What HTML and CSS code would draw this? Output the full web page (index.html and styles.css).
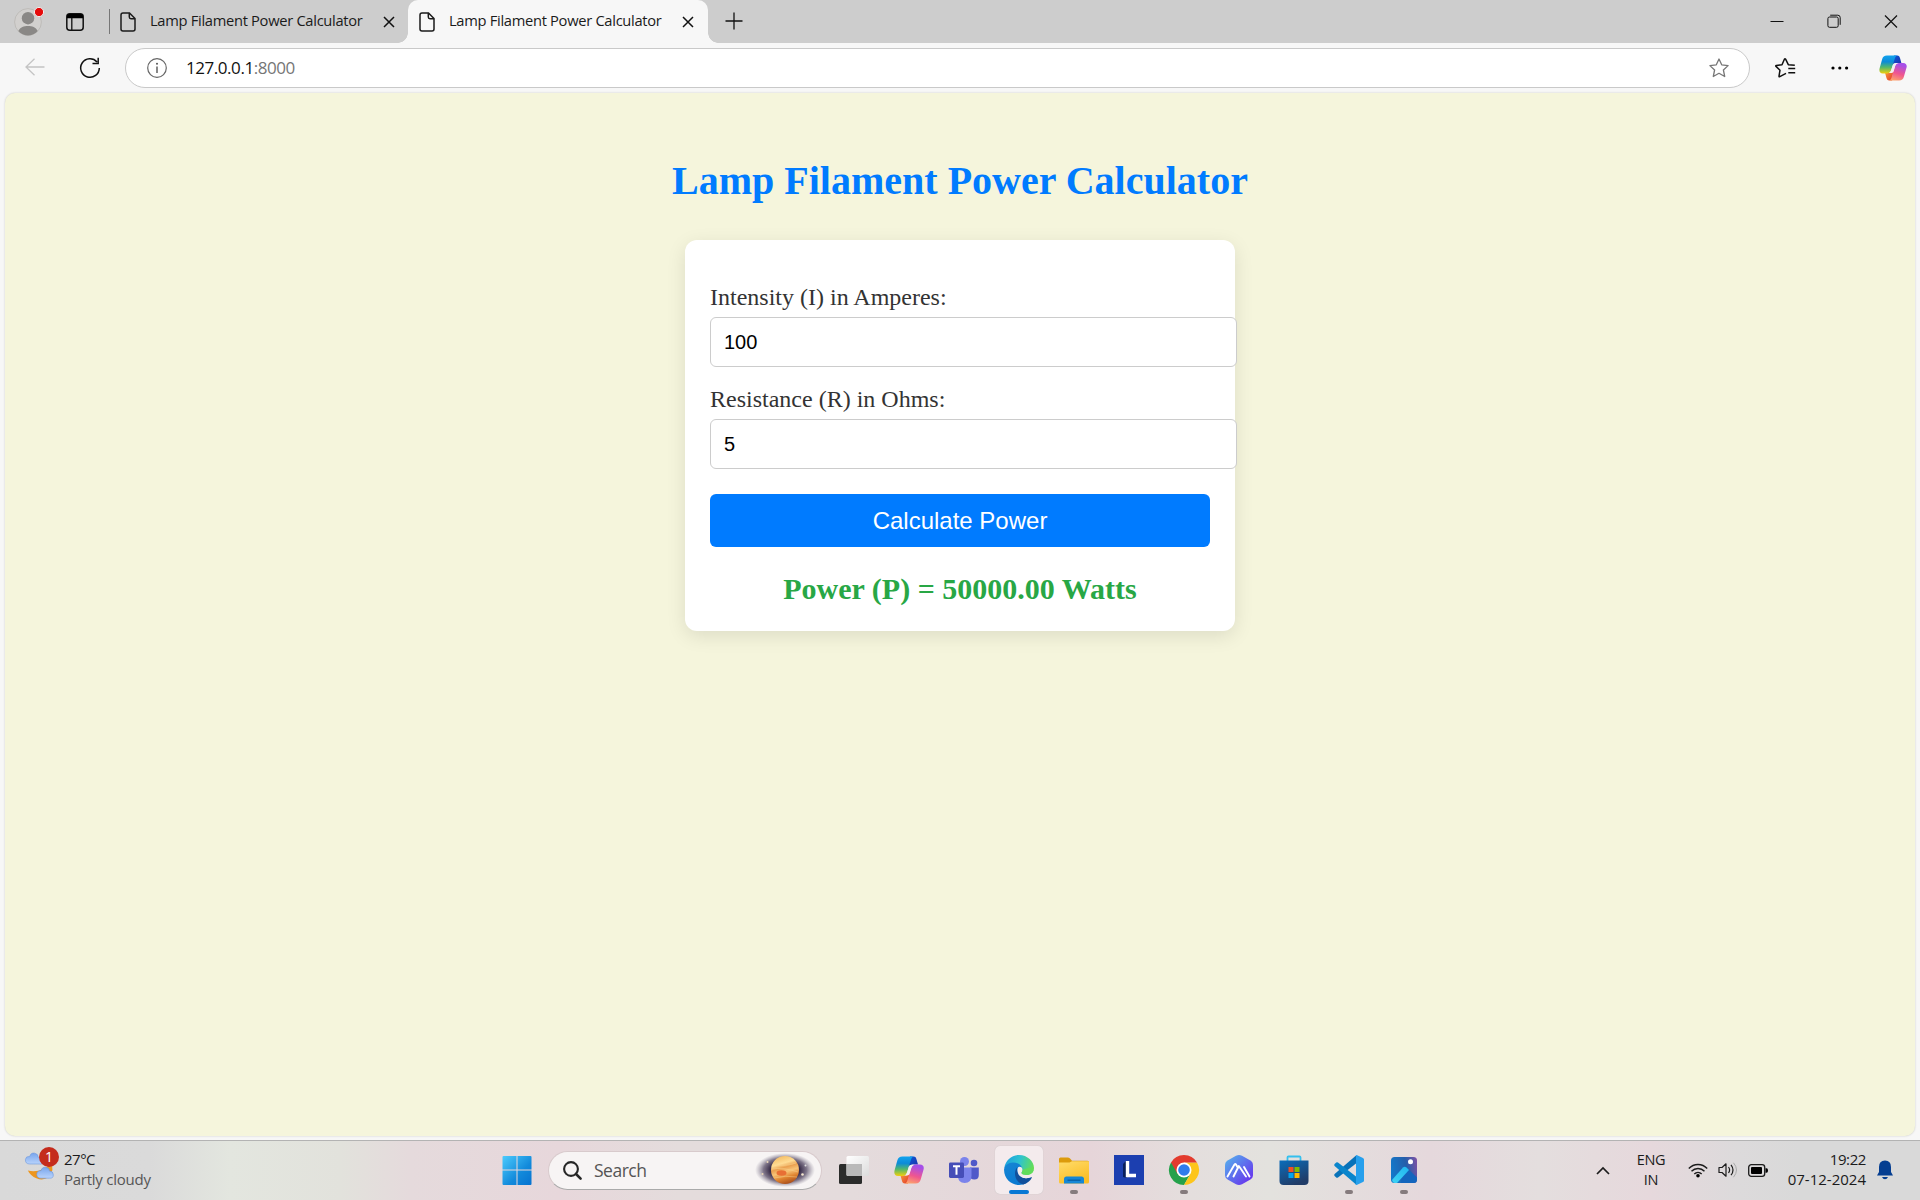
FILE: index.html
```html
<!DOCTYPE html>
<html lang="en">
<head>
<meta charset="utf-8">
<title>Lamp Filament Power Calculator</title>
<link rel="stylesheet" href="styles.css">
</head>
<body>
<svg class="defs" width="0" height="0" aria-hidden="true">
  <defs>
    <linearGradient id="cpBlue" x1="0" y1="0" x2="0" y2="1"><stop offset="0" stop-color="#11a3ee"/><stop offset=".35" stop-color="#0c8bd8"/><stop offset=".65" stop-color="#52b86c"/><stop offset="1" stop-color="#f3cf0b"/></linearGradient>
    <linearGradient id="cpNavy" x1="0" y1="0" x2="1" y2="1"><stop offset="0" stop-color="#0b5bd9"/><stop offset="1" stop-color="#1f2fa8"/></linearGradient>
    <linearGradient id="cpPink" x1=".3" y1="0" x2="0" y2="1"><stop offset="0" stop-color="#a64fe8"/><stop offset=".5" stop-color="#f0568f"/><stop offset="1" stop-color="#ffb265"/></linearGradient>
    <linearGradient id="cpRed" x1="0" y1="0" x2="1" y2="1"><stop offset="0" stop-color="#f9a13a"/><stop offset="1" stop-color="#e2352c"/></linearGradient>
    <symbol id="copilot" viewBox="0 0 30 28">
      <path d="M16 .5h3.500c2 0 2.600 1.200 3.200 3.400L24 8.500h-4c-2.500 0-3.500.3-5.500 2.500z" fill="url(#cpNavy)"/>
      <path d="M14 27.500h-3c-2 0-2.600-1.200-3.200-3.300L6.500 19.500h4c2.300 0 3.400-.5 5-2.500z" fill="url(#cpRed)"/>
      <path d="M8.500.5H20c-1.700 0-2.500 1.400-3.200 3.700l-3.600 11.500c-.9 2.800-2.200 4.300-5 4.300H4C1 20-.3 17.500.6 14.300L3.300 4.500C4.100 1.800 5.500.5 8.500.5z" fill="url(#cpBlue)"/>
      <path d="M21.500 27.500H10.500c1.700 0 2.400-1.400 3.100-3.700l3.400-11.300c.8-2.700 2-4 4.700-4H26c3 0 4.400 2.300 3.500 5.200l-2.800 9.800c-.8 2.700-2.200 4-5.200 4z" fill="url(#cpPink)"/>
      <path d="M17.600 8.700h3c-1.900.5-2.800 1.700-3.400 3.800l-1.500 5c-.4 1.200-1.300 1.900-2.600 1.900h-2.300c1.200-.5 1.900-1.700 2.400-3.200l1.600-5.200c.5-1.500 1.300-2.300 2.800-2.300z" fill="#f3eef2"/>
    </symbol>
    <symbol id="page" viewBox="0 0 16 20">
      <path d="M3 1h6.500L15 6.500V17q0 2-2 2H3q-2 0-2-2V3q0-2 2-2zM9.300 1v4q0 1.700 1.700 1.700h4" fill="none" stroke="#1b1b1b" stroke-width="1.500"/>
    </symbol>
    <symbol id="cross" viewBox="0 0 12 12"><path d="M1 1l10 10M11 1L1 11" stroke="#111" stroke-width="1.500"/></symbol>
  </defs>
</svg>

<div class="window">
  <header class="tabstrip">
    <svg class="avatar" viewBox="0 0 32 32"><circle cx="14" cy="17" r="13.400" fill="#d2d0ce" stroke="#bebcb9"/><circle cx="14" cy="13.200" r="6.200" fill="#8a8886"/><path d="M4.300 26c2-4 5.500-5 9.700-5s7.700 1 9.700 5c-2.500 3-6 4.400-9.700 4.400S6.800 29 4.300 26z" fill="#8a8886"/><circle cx="25" cy="7" r="4.600" fill="#e60b0b" stroke="#eee"/></svg>
    <svg class="workspaces" viewBox="0 0 18 18"><rect x=".8" y=".8" width="16.400" height="16.400" rx="3" fill="none" stroke="#111" stroke-width="1.500"/><path d="M1 5.200V3q0-2 2-2h12q2 0 2 2v2.200z" fill="#000"/><path d="M5.800 5v12" stroke="#111" stroke-width="1.300"/></svg>
    <span class="divider"></span>
    <div class="tab">
      <svg class="tab-icon"><use href="#page"/></svg><span class="tab-title">Lamp Filament Power Calculator</span><svg class="tab-close"><use href="#cross"/></svg>
    </div>
    <div class="tab tab-active">
      <svg class="tab-icon"><use href="#page"/></svg><span class="tab-title">Lamp Filament Power Calculator</span><svg class="tab-close"><use href="#cross"/></svg>
    </div>
    <svg class="new-tab" viewBox="0 0 18 18"><path d="M9 .5v17M.5 9h17" stroke="#111" stroke-width="1.300"/></svg>
    <div class="window-buttons">
      <svg viewBox="0 0 14 14"><path d="M.5 7.500h13" stroke="#111"/></svg>
      <svg viewBox="0 0 14 14"><rect x=".9" y="3" width="10.300" height="10.300" rx="1.600" fill="none" stroke="#111"/><path d="M3.200 1.200h7.600q2.400 0 2.400 2.400v7.200" fill="none" stroke="#111"/></svg>
      <svg viewBox="0 0 14 14"><path d="M1 1.500l12 12M13 1.500L1 13.500" stroke="#111" stroke-width="1.200"/></svg>
    </div>
  </header>

  <nav class="toolbar">
    <svg class="back" viewBox="0 0 20 18"><path d="M19.500 9H1M9.500.8L1 9l8.500 8.200" fill="none" stroke="#c4c4c4" stroke-width="1.300"/></svg>
    <svg class="reload" viewBox="0 0 22 22"><path d="M20.300 11A9.300 9.300 0 1 1 18 4.900M19.200.8v5.700h-5.700" fill="none" stroke="#111" stroke-width="1.500"/></svg>
    <div class="address">
      <svg class="info" viewBox="0 0 20 20"><circle cx="10" cy="10" r="9.300" fill="none" stroke="#666" stroke-width="1.200"/><path d="M10 8.500v6.500" stroke="#555" stroke-width="1.400"/><circle cx="10" cy="5.800" r="1" fill="#555"/></svg>
      <span class="url">127.0.0.1<span class="port">:8000</span></span>
      <svg class="star" viewBox="0 0 20 20"><path d="M10 1l2.700 5.800 6.400.8-4.700 4.400 1.300 6.500L10 15.300l-5.700 3.200L5.600 12 .9 7.600l6.400-.8z" fill="none" stroke="#777" stroke-width="1.300" stroke-linejoin="round"/></svg>
    </div>
    <svg class="favorites" viewBox="0 0 21 20"><path d="M19.800 7.300l-6.500-.6L10.600 1.200q-.6-.8-1.200 0L7 6.700l-5.700.8q-.9.200-.3.900L5 12.200l-1 6q0 .9.800.5L11 15.400M13.300 10.500h6.900M13.300 14.800h6.900" fill="none" stroke="#111" stroke-width="1.500" stroke-linejoin="round"/></svg>
    <svg class="more" viewBox="0 0 18 4"><circle cx="2" cy="2" r="1.600"/><circle cx="8.800" cy="2" r="1.600"/><circle cx="15.600" cy="2" r="1.600"/></svg>
    <svg class="sidebar-copilot"><use href="#copilot"/></svg>
  </nav>

  <main class="viewport">
    <h1 class="heading">Lamp Filament Power Calculator</h1>
    <form class="card">
      <label class="label" for="intensity">Intensity (I) in Amperes:</label>
      <input class="field" id="intensity" type="text" value="100">
      <label class="label" for="resistance">Resistance (R) in Ohms:</label>
      <input class="field" id="resistance" type="text" value="5">
      <button class="submit" type="button">Calculate Power</button>
      <div class="result">Power (P) = 50000.00 Watts</div>
    </form>
  </main>

  <footer class="taskbar">
    <div class="weather">
      <svg class="weather-icon" viewBox="0 0 36 36">
        <defs><linearGradient id="cloud" x1="0" y1="0" x2="0" y2="1"><stop offset="0" stop-color="#78a5ed"/><stop offset="1" stop-color="#bad4fb"/></linearGradient></defs>
        <path d="M3 25q9 2 17-2 6-3 7-9 5 11-2 18-6 4-13 1-6-2-9-8z" fill="#ed961f"/>
        <path d="M5 18q-5 0-4.500-5Q1 9.500 5 10q1-4 5-3.500Q14 7 14 11q5 0 5 4t-4 3z" fill="url(#cloud)" stroke="#6995de" stroke-width=".6"/>
        <path d="M17 33q-4.500 0-4.500-4t4.500-4q1-4 5-3.500t4 4q4 0 4 4t-4 3.500z" fill="url(#cloud)" stroke="#6995de" stroke-width=".6"/>
      </svg>
      <span class="badge">1</span>
      <div class="weather-text"><span class="temp">27°C</span><span class="sky">Partly cloudy</span></div>
    </div>

    <div class="apps">
      <div class="app">
        <svg width="30" height="30" viewBox="0 0 30 30"><defs><linearGradient id="win" x1="0" y1="0" x2="1" y2="1"><stop offset="0" stop-color="#4ccbfd"/><stop offset=".6" stop-color="#128adb"/><stop offset="1" stop-color="#0672d0"/></linearGradient></defs><path d="M1.500 1H14.500V14.500H.5V2q0-1 1-1zM15.500 1H28.500q1 0 1 1V14.500H15.500zM.5 15.500H14.500V30H1.500q-1 0-1-1zM15.500 15.500H29.500V29q0 1-1 1H15.500z" fill="url(#win)"/></svg>
      </div>
      <div class="search">
        <svg class="lens" viewBox="0 0 19 19"><circle cx="8" cy="8" r="6.900" fill="none" stroke="#262626" stroke-width="2.100"/><path d="M13 13l4.600 4.600" stroke="#262626" stroke-width="2.600" stroke-linecap="round"/></svg>
        <span class="search-text">Search</span>
        <svg class="planet" viewBox="0 0 60 34">
          <defs><radialGradient id="space"><stop offset="0" stop-color="#2a1f3a"/><stop offset=".5" stop-color="#3a2e4a"/><stop offset=".72" stop-color="#60556e" stop-opacity=".8"/><stop offset="1" stop-color="#8f899a" stop-opacity="0"/></radialGradient>
          <linearGradient id="jup" x1=".2" y1="0" x2=".5" y2="1"><stop offset="0" stop-color="#f3b85d"/><stop offset=".3" stop-color="#ffdc94"/><stop offset=".45" stop-color="#eaa050"/><stop offset=".6" stop-color="#f8c477"/><stop offset=".8" stop-color="#df832f"/><stop offset="1" stop-color="#ae531d"/></linearGradient></defs>
          <ellipse cx="30" cy="17" rx="30" ry="17" fill="url(#space)"/>
          <circle cx="30" cy="17" r="14" fill="url(#jup)"/><ellipse cx="26.500" cy="20" rx="5" ry="2.800" fill="#e86f34"/><path d="M18 11q12 3 23-1M17 16q11-2 26 3M19 25q12-3 23-1" stroke="#fbd793" stroke-width="1" fill="none" opacity=".45"/>
          <circle cx="12.500" cy="9" r="1" fill="#ead6b8"/><circle cx="7.500" cy="21" r="1" fill="#ead6b8"/><circle cx="50.500" cy="12.500" r="1" fill="#ddd"/><circle cx="47.500" cy="21.500" r="1.300" fill="#f6e8cf"/>
        </svg>
      </div>
      <div class="app">
        <svg width="32" height="30" viewBox="0 0 32 30"><defs><linearGradient id="tv" x1="0" y1="0" x2="1" y2="1"><stop offset="0" stop-color="#fff"/><stop offset="1" stop-color="#dcdcdc"/></linearGradient></defs><rect x="1" y="9" width="23" height="20" rx="1.500" fill="#2b2c2b"/><rect x="8.500" y="1" width="22.500" height="20" rx="1.500" fill="url(#tv)"/><path d="M8.500 9H24V21H10q-1.500 0-1.500-1.500z" fill="#b9b9b9"/></svg>
      </div>
      <div class="app"><svg width="30" height="28"><use href="#copilot"/></svg></div>
      <div class="app">
        <svg width="30" height="28" viewBox="0 0 30 28"><circle cx="25" cy="7" r="3.300" fill="#5059c9"/><path d="M21 11.500h8.800V19q0 4.500-4.500 4.500T21 19z" fill="#5059c9"/><circle cx="15.500" cy="5.500" r="4.500" fill="#7b83eb"/><path d="M9 11.500h13.500V20q0 7-6.800 7T9 20z" fill="#7b83eb"/><rect x="0" y="6.500" width="15" height="15.500" rx="1.400" fill="#464eb8"/><path d="M4 10.300h7M7.500 10.300v8.500" stroke="#fff" stroke-width="2"/></svg>
      </div>
      <div class="app app-current">
        <svg width="30" height="30" viewBox="0 0 30 30"><defs><linearGradient id="eg" x1="0" y1=".3" x2="1" y2=".5"><stop offset="0" stop-color="#1b9fdf"/><stop offset=".5" stop-color="#2fc3cf"/><stop offset="1" stop-color="#64de55"/></linearGradient><linearGradient id="eb" x1="0" y1="0" x2=".6" y2="1"><stop offset="0" stop-color="#1686d4"/><stop offset="1" stop-color="#0a78d0"/></linearGradient></defs>
        <path d="M.3 13C1.500 5.500 7.500 0 15 0c8.500 0 15 6.500 15 13 0 4.500-3.300 7-7.500 7-3 0-5-.8-5-2 0-.7 1-1.300 1-3.200L10 8z" fill="url(#eg)"/>
        <path d="M.1 14C1 10.500 4 7.500 9 7.500c5.500 0 9.300 3.500 9.500 7.300L17 20l5.500 8A15 15 0 0 1 15 30C7 30-.5 23.500.1 14z" fill="url(#eb)"/>
        <path d="M13 12.500C9 17 11 27.500 19.300 29.400c3.700-1.100 6.700-3.400 8.400-6.500.3-.6-.2-1-.8-.7-4 1.700-8.400 1.200-11-1.200-2-1.800-3-4-2.900-8.500z" fill="#11509c"/>
        <path d="M15.500 11.700c1.900 0 3 1.300 3 3 0 1.900-1 2.500-1 3.300 0 1.200 2 2 5 2 2.400 0 4.500-.8 5.900-2.300l-1.200 4.400c-4 1.700-8.400 1.400-11-.8-3-2.300-4-9.600-.7-9.600z" fill="#f4ebed"/>
        <path d="M17.500 18c0 1.200 2 2 5 2 3.300 0 6-1.500 7-4.500l-2-3.500-9 2.700c0 2-1 2.500-1 3.300z" fill="#62dc5b"/></svg>
        <span class="running"></span>
      </div>
      <div class="app">
        <svg width="30" height="27" viewBox="0 0 30 27"><defs><linearGradient id="fold" x1="0" y1="0" x2=".5" y2="1"><stop offset="0" stop-color="#ffdc6b"/><stop offset="1" stop-color="#fbbe26"/></linearGradient></defs><path d="M0 2Q0 .5 1.500.5H9q1.500 0 2.500 1.500l1.500 1.700h15.500Q30 3.700 30 5.500V8H0z" fill="#dc9b0c"/><path d="M0 5.500h10.500l2.500-1.300h16q1 0 1 1V25q0 1.500-1.500 1.500H1.500Q0 26.500 0 25z" fill="url(#fold)"/><path d="M5 26.500V22q0-2.500 2.500-2.500h15Q25 19.500 25 22v4.500z" fill="#1787d6"/><path d="M8.500 23.200h13" stroke="#075a9f" stroke-width="1.200"/></svg>
        <span class="dot"></span>
      </div>
      <div class="app">
        <svg width="30" height="30" viewBox="0 0 30 30"><path d="M0 0h30v30H0z" fill="#1c3fb0"/><path d="M12 6l-3 3v13l4 1z" fill="#081f5b"/><path d="M13.500 6v14.500H22" fill="none" stroke="#fff" stroke-width="3.400"/></svg>
      </div>
      <div class="app">
        <svg width="30" height="30" viewBox="0 0 30 30"><path d="M2 7.500A15 15 0 0 0 15 30l6.500-11.300L15 15z" fill="#25a14b"/><path d="M28 7.500A15 15 0 0 1 15 30l6.500-11.300L15 7.500z" fill="#fdc51b"/><path d="M15 7.500h13A15 15 0 0 0 2 7.500L8.500 18.700 15 15z" fill="#e33b2e"/><circle cx="15" cy="15" r="7.500" fill="#fff"/><circle cx="15" cy="15" r="5.800" fill="#2f7cec"/></svg>
        <span class="dot"></span>
      </div>
      <div class="app">
        <svg width="30" height="30" viewBox="0 0 30 30"><defs><linearGradient id="arc" x1="0" y1="0" x2="1" y2="1"><stop offset="0" stop-color="#54b8ec"/><stop offset="1" stop-color="#6a24ee"/></linearGradient></defs><path d="M12 .8q3-1.500 6 0l8 4.500q3 1.700 3 5v9.400q0 3.300-3 5l-8 4.500q-3 1.500-6 0l-8-4.500q-3-1.700-3-5v-9.400q0-3.300 3-5z" fill="url(#arc)"/><path d="M3.500 21.500L10.500 9.500q.8-1 1.500 0l2 3.500M9.500 21.500L14.800 11l2.500 3.500L22 21.500M20 12l5.500 9.500" fill="none" stroke="#fff" stroke-width="1.900" stroke-linecap="round" stroke-linejoin="round"/></svg>
      </div>
      <div class="app">
        <svg width="30" height="30" viewBox="0 0 30 30"><defs><linearGradient id="store" x1="0" y1="0" x2=".5" y2="1"><stop offset="0" stop-color="#0b6dbb"/><stop offset="1" stop-color="#213c67"/></linearGradient></defs><path d="M8.500 6V2.500Q8.500 1.500 9.500 1.500H20.500Q21.500 1.500 21.500 2.500V6" fill="none" stroke="#35c0ee" stroke-width="1.800"/><path d="M.5 5.500h29V26q0 4-4 4h-21q-4 0-4-4z" fill="url(#store)"/><path d="M9.500 12h5v5h-5z" fill="#f25022"/><path d="M15.500 12h5v5h-5z" fill="#7fba00"/><path d="M9.500 18h5v5h-5z" fill="#00a4ef"/><path d="M15.500 18h5v5h-5z" fill="#ffb900"/></svg>
      </div>
      <div class="app">
        <svg width="30" height="30" viewBox="0 0 30 30"><path d="M22 .5v8L4 22.500q-1 .7-1.800 0L.6 21q-1-1 0-2z" fill="#0872b9"/><path d="M22 29.500v-8L4 7.500q-1-.7-1.800 0L.6 9q-1 1 0 2z" fill="#0a85cc"/><path d="M22 .2q.5-.3 1.200 0L29 3q1 .5 1 1.600v20.800q0 1.100-1 1.600l-5.800 2.800q-1 .4-1.800-.4.600.2.600-.8z" fill="#27a0ed"/></svg>
        <span class="dot"></span>
      </div>
      <div class="app">
        <svg width="26" height="26" viewBox="0 0 26 26"><defs><linearGradient id="ph" x1="0" y1=".5" x2="1" y2=".3"><stop offset="0" stop-color="#1379cb"/><stop offset=".6" stop-color="#255eaa"/><stop offset="1" stop-color="#7753a5"/></linearGradient><linearGradient id="ph2" x1="1" y1="0" x2="0" y2="1"><stop offset="0" stop-color="#21b6ef"/><stop offset="1" stop-color="#40d4f5"/></linearGradient></defs><rect width="26" height="26" rx="3.500" fill="url(#ph)"/><path d="M12 10.500q1.800-1.500 3.500 0L26 20.500V22.500q0 3.500-3.500 3.500H10z" fill="#1465bd"/><path d="M1 23L12 10.500q1.800-1.500 3.500 0l2.500 2.500L6 26H3.500q-1.800 0-2.500-3z" fill="url(#ph2)"/><circle cx="19.500" cy="4.700" r="2.500" fill="#fff"/></svg>
        <span class="dot"></span>
      </div>
    </div>

    <div class="tray">
      <svg class="chevron" viewBox="0 0 14 9"><path d="M1 8l6-6 6 6" fill="none" stroke="#1c1c1c" stroke-width="1.700"/></svg>
      <div class="language"><span>ENG</span><span>IN</span></div>
      <svg class="wifi" viewBox="0 0 20 16"><path d="M.8 6.500a12.500 12.500 0 0 1 18.400 0M3.500 9.300a9 9 0 0 1 13 0M6.300 12a5.400 5.400 0 0 1 7.400 0" fill="none" stroke="#1c1c1c" stroke-width="1.400"/><circle cx="10" cy="13.800" r="1.800"/></svg>
      <svg class="volume" viewBox="0 0 20 16"><path d="M1 5.500h3L8 1.800v12.400l-4-3.700H1z" fill="none" stroke="#1c1c1c" stroke-width="1.200" stroke-linejoin="round"/><path d="M10.500 5q2.200 3 0 6M13 2.800q4 5.200 0 10.400" fill="none" stroke="#1c1c1c" stroke-width="1.200"/><path d="M15.500.8q6 7.200 0 14.400" fill="none" stroke="#aaa"/></svg>
      <svg class="battery" viewBox="0 0 20 13"><rect x=".7" y=".7" width="16" height="11.600" rx="2.600" fill="none" stroke="#1c1c1c" stroke-width="1.300"/><rect x="3" y="3" width="11" height="7" rx="1"/><path d="M17.500 4.200h1q1.500 0 1.500 2.300t-1.500 2.300h-1z"/></svg>
      <div class="clock"><span>19:22</span><span class="date">07-12-2024</span></div>
      <svg class="bell" viewBox="0 0 16 20"><path d="M8 .5q6 0 6 6.500v5l2 3.500H0L2 12V7Q2 .5 8 .5zM5 17h6q-1 2.300-3 2.300T5 17z" fill="#053e91"/></svg>
    </div>
  </footer>
</div>
</body>
</html>
```
FILE: styles.css
```css
* { box-sizing: border-box; }
body { margin: 0; overflow: hidden; font-family: "Open Sans", sans-serif; color: #1b1b1b; }
svg { display: block; flex: none; overflow: visible; }
.defs { position: absolute; }
.window { display: grid; grid-template-rows: 43px 50px 1043px 64px; width: 1920px; height: 1200px; background: #f7f7f7; }

/* Tab strip */
.tabstrip { display: flex; align-items: center; background: #cdcdcd; padding-left: 14px; }
.avatar { width: 32px; height: 32px; margin-top: -2px; }
.workspaces { width: 18px; height: 18px; margin-left: 20px; }
.divider { width: 1px; height: 25px; margin-left: 25px; background: #777; }
.tab { display: flex; align-items: center; width: 298px; height: 43px; padding-left: 10px; }
.tab-icon { width: 16px; height: 20px; margin-top: 1px; }
.tab-title { width: 234px; padding-left: 14px; font-size: 14.7px; line-height: 20px; letter-spacing: -.3px; white-space: nowrap; margin-top: -3px; }
.tab-close { width: 12px; height: 12px; margin-left: 13px; margin-top: 1px; }
.tab .tab-title { flex: none; }
.tab-active { position: relative; width: 300px; padding-left: 11px; background: #f7f7f7; border-radius: 10px 10px 0 0; }
.tab-active::before, .tab-active::after { content: ""; position: absolute; bottom: 0; width: 10px; height: 10px; }
.tab-active::before { left: -10px; background: radial-gradient(circle at 0 0, #cdcdcd 9.500px, #f7f7f7 10px); }
.tab-active::after { right: -10px; background: radial-gradient(circle at 100% 0, #cdcdcd 9.500px, #f7f7f7 10px); }
.new-tab { width: 18px; height: 18px; margin-left: 17px; margin-top: -1px; }
.window-buttons { display: flex; gap: 43px; margin-left: auto; margin-top: -1px; padding-right: 22px; }
.window-buttons svg { width: 14px; height: 14px; }

/* Toolbar */
.toolbar { display: flex; align-items: center; padding: 0 13px 0 25px; }
.back { width: 20px; height: 18px; margin-top: -2px; }
.reload { width: 22px; height: 22px; margin: -1px 0 0 34px; }
.address { display: flex; align-items: center; width: 1625px; height: 40px; margin-left: 24px; padding: 0 20px 0 21px; background: #fff; border: 1px solid #c9c9c9; border-radius: 20px; }
.info { width: 20px; height: 20px; }
.url { margin-left: 19px; font-size: 17px; line-height: 24px; letter-spacing: -.45px; color: #111; }
.port { color: #767676; }
.star { width: 20px; height: 20px; margin-left: auto; }
.favorites { width: 21px; height: 20px; margin-left: 25px; }
.more { width: 18px; height: 4px; margin-left: 35px; }
.sidebar-copilot { width: 28px; height: 26px; margin-left: auto; }

/* Calculator page */
.viewport { margin: 0 5px; padding-top: 62px; background: #f5f5dc; border-radius: 10px; box-shadow: 0 0 2px 0 #c4c4c4; }
.heading { margin: 0; font: bold 40px/52px "Liberation Serif", serif; text-align: center; color: #007bff; }
.card { width: 550px; height: 391px; margin: 33px auto 0; padding: 43px 25px 0; background: #fff; border-radius: 12px; box-shadow: 0 5px 19px rgba(0, 0, 0, .1); }
.label { display: block; height: 34px; font: 24px/28px "Liberation Serif", serif; color: #333; }
.field { display: block; width: 527px; height: 50px; margin: 0 0 18px; padding: 0 13px; border: 1px solid #ccc; border-radius: 6px; font: 20px "Liberation Sans", sans-serif; color: #000; background: #fff; }
.submit { display: block; width: 500px; height: 53px; margin-top: 25px; padding: 0; border: 0; border-radius: 6px; background: #007bff; color: #fff; font: 24px "Liberation Sans", sans-serif; }
.result { margin-top: 24px; text-align: center; font: bold 30px/35px "Liberation Serif", serif; color: #28a745; }

/* Taskbar */
.taskbar { display: grid; grid-template-columns: 489px 945px 1fr; height: 60px; margin-top: 4px; padding-bottom: 1px; border-top: 1px solid #b3b3b3; background: linear-gradient(90deg, #d9d9d9 0, #dadada 150px, #e3e6df 230px, #e2e2dc 340px, #e5dadc 410px, #e7d7db 560px, #e4dcdc 680px, #e4dbdc 850px, #e6d5d9 1090px, #e4dedd 1190px, #e3e2de 1270px, #e5d8dc 1430px, #e4dede 1540px, #e6d8dc 1650px, #dcdadb 1740px, #d9d9d9 1800px); }
.weather { position: relative; display: flex; padding: 6px 0 0 25px; }
.weather-icon { width: 34px; height: 36px; margin-top: -1px; }
.badge { position: absolute; left: 39px; top: 6px; width: 20px; height: 20px; border-radius: 50%; background: #c42b1c; color: #fff; font-size: 14px; line-height: 20px; text-align: center; }
.weather-text { display: flex; flex-direction: column; margin: 2px 0 0 5px; font-size: 15px; line-height: 20px; letter-spacing: -.5px; }
.sky { color: #565656; letter-spacing: -.25px; }
.apps { display: flex; align-items: center; }
.app { position: relative; display: flex; align-items: center; justify-content: center; width: 55px; height: 48px; }
.app-current { width: 48px; margin: 0 3.500px; background: #f4ebed; border-radius: 5px; box-shadow: 0 0 1px #bbb; }
.running, .dot { position: absolute; bottom: 0; left: 50%; transform: translateX(-50%); height: 4px; border-radius: 2px; }
.running { width: 20px; background: #0878d4; }
.dot { width: 8px; background: #857b7d; }
.search { display: flex; align-items: center; width: 274px; height: 39px; margin: 0 4px; padding: 0 6px 0 14px; background: #f7f4f4; border: 1px solid #d8cacc; border-bottom-color: #aaa; border-radius: 20px; }
.lens { width: 19px; height: 19px; }
.search-text { margin-left: 12px; font-size: 17.500px; line-height: 24px; letter-spacing: -.5px; color: #555; }
.planet { width: 60px; height: 34px; margin-left: auto; }
.tray { position: relative; display: flex; align-items: center; padding-left: 162px; }
.chevron { width: 14px; height: 9px; }
.language { display: flex; flex-direction: column; width: 40px; margin-left: 21px; text-align: center; font-size: 14.500px; line-height: 20px; letter-spacing: -.3px; }
.wifi { width: 20px; height: 16px; margin-left: 17px; }
.volume { width: 20px; height: 16px; margin-left: 10px; }
.battery { width: 20px; height: 13px; margin-left: 10px; }
.clock { display: flex; flex-direction: column; width: 98px; margin-top: -2px; text-align: right; font-size: 15px; line-height: 20px; letter-spacing: -.4px; }
.date { letter-spacing: 0; }
.bell { width: 16px; height: 20px; margin-left: 11px; }
```
